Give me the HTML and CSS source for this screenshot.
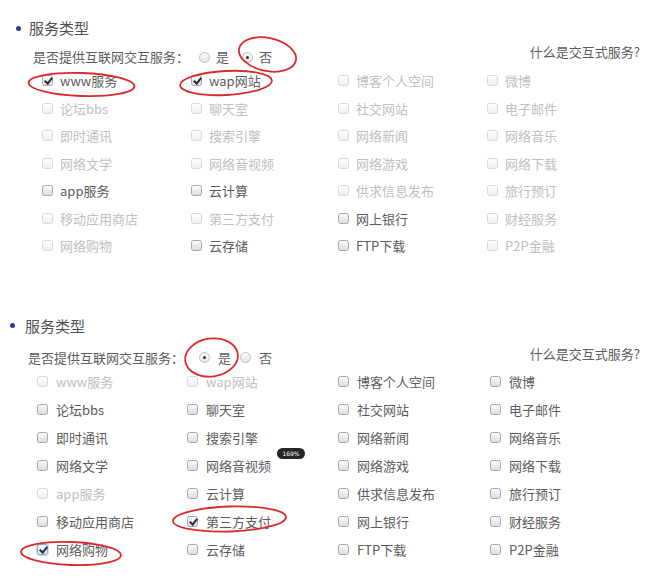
FILE: index.html
```html
<!DOCTYPE html>
<html lang="zh-CN">
<head>
<meta charset="utf-8">
<title>服务类型</title>
<link rel="stylesheet" href="styles.css">
</head>
<body>
<div class="page">
  <section class="svc svc-a">
    <h2 class="svc-title"><span class="dot"></span>服务类型</h2>
    <div class="q-row">
      <div class="q">
        <span class="q-label">是否提供互联网交互服务：</span>
        <span class="opt"><span class="rd"></span>是</span>
        <span class="opt"><span class="rd on"></span>否</span>
      </div>
      <span class="help">什么是交互式服务?</span>
    </div>
    <ul class="grid">
      <li class="item checked"><span class="cb"></span>www服务</li>
      <li class="item checked"><span class="cb"></span>wap网站</li>
      <li class="item off"><span class="cb"></span>博客个人空间</li>
      <li class="item off"><span class="cb"></span>微博</li>
      <li class="item off"><span class="cb"></span>论坛bbs</li>
      <li class="item off"><span class="cb"></span>聊天室</li>
      <li class="item off"><span class="cb"></span>社交网站</li>
      <li class="item off"><span class="cb"></span>电子邮件</li>
      <li class="item off"><span class="cb"></span>即时通讯</li>
      <li class="item off"><span class="cb"></span>搜索引擎</li>
      <li class="item off"><span class="cb"></span>网络新闻</li>
      <li class="item off"><span class="cb"></span>网络音乐</li>
      <li class="item off"><span class="cb"></span>网络文学</li>
      <li class="item off"><span class="cb"></span>网络音视频</li>
      <li class="item off"><span class="cb"></span>网络游戏</li>
      <li class="item off"><span class="cb"></span>网络下载</li>
      <li class="item"><span class="cb"></span>app服务</li>
      <li class="item"><span class="cb"></span>云计算</li>
      <li class="item off"><span class="cb"></span>供求信息发布</li>
      <li class="item off"><span class="cb"></span>旅行预订</li>
      <li class="item off"><span class="cb"></span>移动应用商店</li>
      <li class="item off"><span class="cb"></span>第三方支付</li>
      <li class="item"><span class="cb"></span>网上银行</li>
      <li class="item off"><span class="cb"></span>财经服务</li>
      <li class="item off"><span class="cb"></span>网络购物</li>
      <li class="item"><span class="cb"></span>云存储</li>
      <li class="item"><span class="cb"></span>FTP下载</li>
      <li class="item off"><span class="cb"></span>P2P金融</li>
    </ul>
  </section>

  <section class="svc svc-b">
    <h2 class="svc-title"><span class="dot"></span>服务类型</h2>
    <div class="q-row">
      <div class="q">
        <span class="q-label">是否提供互联网交互服务：</span>
        <span class="opt"><span class="rd on"></span>是</span>
        <span class="opt"><span class="rd"></span>否</span>
      </div>
      <span class="help">什么是交互式服务?</span>
    </div>
    <ul class="grid">
      <li class="item off"><span class="cb"></span>www服务</li>
      <li class="item off"><span class="cb"></span>wap网站</li>
      <li class="item"><span class="cb"></span>博客个人空间</li>
      <li class="item"><span class="cb"></span>微博</li>
      <li class="item"><span class="cb"></span>论坛bbs</li>
      <li class="item"><span class="cb"></span>聊天室</li>
      <li class="item"><span class="cb"></span>社交网站</li>
      <li class="item"><span class="cb"></span>电子邮件</li>
      <li class="item"><span class="cb"></span>即时通讯</li>
      <li class="item"><span class="cb"></span>搜索引擎</li>
      <li class="item"><span class="cb"></span>网络新闻</li>
      <li class="item"><span class="cb"></span>网络音乐</li>
      <li class="item"><span class="cb"></span>网络文学</li>
      <li class="item"><span class="cb"></span>网络音视频</li>
      <li class="item"><span class="cb"></span>网络游戏</li>
      <li class="item"><span class="cb"></span>网络下载</li>
      <li class="item off"><span class="cb"></span>app服务</li>
      <li class="item"><span class="cb"></span>云计算</li>
      <li class="item"><span class="cb"></span>供求信息发布</li>
      <li class="item"><span class="cb"></span>旅行预订</li>
      <li class="item"><span class="cb"></span>移动应用商店</li>
      <li class="item checked"><span class="cb"></span>第三方支付</li>
      <li class="item"><span class="cb"></span>网上银行</li>
      <li class="item"><span class="cb"></span>财经服务</li>
      <li class="item checked focus"><span class="cb"></span>网络购物</li>
      <li class="item"><span class="cb"></span>云存储</li>
      <li class="item"><span class="cb"></span>FTP下载</li>
      <li class="item"><span class="cb"></span>P2P金融</li>
    </ul>
  </section>

  <svg class="marks" width="657" height="581" viewBox="0 0 657 581" aria-hidden="true">
    <g fill="none" stroke="#d92b2f" stroke-width="1.8">
      <ellipse cx="81.5" cy="84.5" rx="53" ry="11.5" transform="rotate(2 81.5 84.5)"/>
      <ellipse cx="226" cy="83" rx="46" ry="12" transform="rotate(-3 226 83)"/>
      <ellipse cx="267.5" cy="54.5" rx="29" ry="16.5" transform="rotate(12 267.5 54.5)"/>
      <ellipse cx="211.5" cy="357.5" rx="26.5" ry="19" transform="rotate(-8 211.5 357.5)"/>
      <ellipse cx="229.5" cy="519" rx="56.5" ry="12.5" transform="rotate(-2 229.5 519)"/>
      <ellipse cx="71" cy="553.5" rx="50" ry="11.5" transform="rotate(2 71 553.5)"/>
    </g>
  </svg>
  <span class="badge">169%</span>
</div>
</body>
</html>
```

FILE: styles.css
```css
* { box-sizing: border-box; }

html, body {
  margin: 0;
  padding: 0;
  background: #ffffff;
}

body {
  font-family: "Noto Sans CJK SC", "Noto Sans", sans-serif;
  font-size: 13px;
  color: #5c5c5c;
}

.page {
  position: relative;
  width: 657px;
  height: 581px;
  overflow: hidden;
}

.svc-title {
  display: flex;
  align-items: center;
  margin: 0;
  font-size: 15px;
  font-weight: normal;
  line-height: 20px;
  color: #505050;
}

.dot {
  width: 5px;
  height: 5px;
  border-radius: 50%;
  background: #2b3a8c;
}

.q-row {
  display: flex;
  justify-content: space-between;
  align-items: flex-start;
  padding-right: 17px;
}

.q {
  display: flex;
  align-items: center;
  height: 20px;
  line-height: 20px;
  color: #5c5c5c;
}

.opt {
  display: flex;
  align-items: center;
}

.help {
  line-height: 20px;
  color: #5c5c5c;
}

.rd {
  position: relative;
  width: 11px;
  height: 11px;
  border-radius: 50%;
  border: 1px solid #bdbdbd;
  background: linear-gradient(#ffffff, #e2e2e2);
}

.rd.on::after {
  content: "";
  position: absolute;
  left: 3px;
  top: 3px;
  width: 3px;
  height: 3px;
  border-radius: 50%;
  background: #333333;
}

.grid {
  display: grid;
  margin: 0;
  list-style: none;
}

.item {
  display: flex;
  align-items: center;
  white-space: nowrap;
  color: #5c5c5c;
}

.item.off {
  color: #c0c0c0;
}

.cb {
  position: relative;
  flex: none;
  width: 11px;
  height: 11px;
  border: 1px solid #a6a6a6;
  border-radius: 2.5px;
  background: linear-gradient(#fafafa, #dedede);
}

.item.off .cb {
  border-color: #d8d8d8;
  background: linear-gradient(#ffffff, #f0f0f0);
}

.item.checked .cb::after {
  content: "";
  position: absolute;
  left: 3px;
  top: 0px;
  width: 3px;
  height: 6px;
  border-right: 2px solid #2c2c2c;
  border-bottom: 2px solid #2c2c2c;
  transform: rotate(40deg);
}

.item.focus .cb {
  border-color: #7fa6dd;
  box-shadow: 0 0 0 1px #c9dbf3;
}

/* first block */
.svc-a {
  padding-top: 18px;
}

.svc-a .svc-title {
  padding-left: 16px;
  gap: 8px;
}

.svc-a .q-row {
  margin-top: 4px;
}

.svc-a .q {
  margin-top: 5px;
  padding-left: 33px;
}

.svc-a .q-label {
  width: 166px;
}

.svc-a .rd {
  margin-right: 6px;
}

.svc-a .opt {
  margin-right: 13px;
}

.svc-a .grid {
  padding: 0 0 0 42px;
  grid-template-columns: 149px 147px 149px 1fr;
  grid-auto-rows: 27.5px;
}

.svc-a .cb {
  margin-right: 7px;
}

/* second block */
.svc-b {
  padding-top: 56px;
}

.svc-b .svc-title {
  padding-left: 10px;
  gap: 10px;
}

.svc-b .q-row {
  margin-top: 8px;
}

.svc-b .q {
  margin-top: 4px;
  padding-left: 28px;
}

.svc-b .q-label {
  width: 171px;
}

.svc-b .rd {
  margin-right: 8px;
}

.svc-b .opt {
  margin-right: 9px;
}

.svc-b .grid {
  padding: 0 0 0 37px;
  grid-template-columns: 150px 151px 152px 1fr;
  grid-auto-rows: 28px;
}

.svc-b .cb {
  margin-right: 8px;
}

/* overlays */
.marks {
  position: absolute;
  left: 0;
  top: 0;
  pointer-events: none;
}

.badge {
  position: absolute;
  left: 277px;
  top: 448px;
  width: 28px;
  height: 11px;
  border-radius: 6px;
  background: #262626;
  color: #ffffff;
  font-family: "DejaVu Sans", sans-serif;
  font-size: 6px;
  line-height: 11px;
  text-align: center;
}
```
